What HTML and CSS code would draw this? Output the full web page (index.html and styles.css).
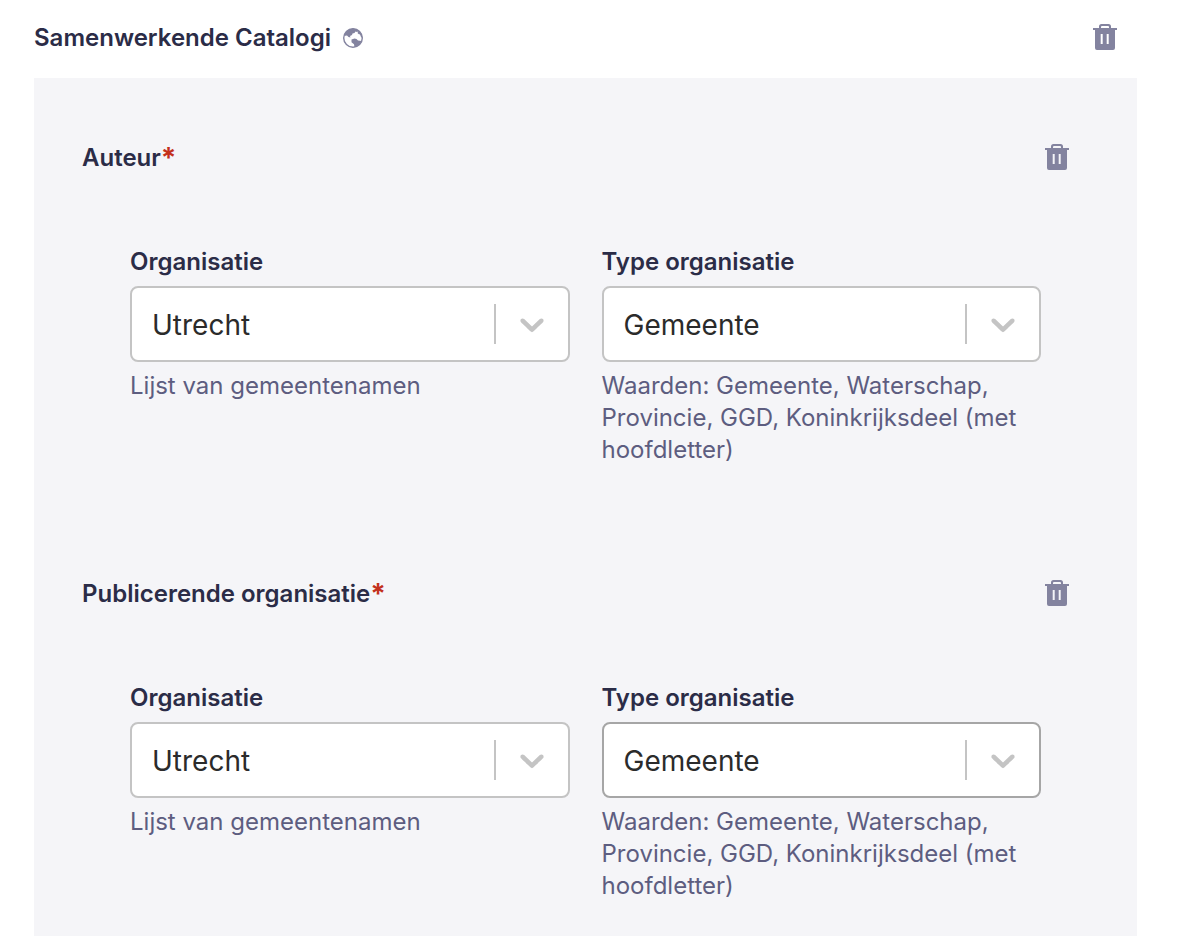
FILE: index.html
```html
<!DOCTYPE html>
<html lang="nl">
<head>
<meta charset="utf-8">
<meta name="viewport" content="width=device-width, initial-scale=1">
<title>Samenwerkende Catalogi</title>
<link rel="stylesheet" href="styles.css">
</head>
<body>
<svg class="sprite" aria-hidden="true">
  <symbol id="trash" viewBox="0 0 24 28">
    <path d="M6 5V3.500Q6 1 8.500 1h7Q18 1 18 3.500V5h6v2h-2v18q0 2-2 2H4q-2 0-2-2V7H0V5zm2 0h8V4q0-1-1-1H9Q8 3 8 4zM7.700 11v10h2V11zm6 0v10h2V11z" fill="currentColor" fill-rule="evenodd"/>
  </symbol>
  <symbol id="chevron" viewBox="0 0 20 20">
    <path d="M4.516 7.548c.436-.446 1.043-.481 1.576 0L10 11.295l3.908-3.747c.533-.481 1.141-.446 1.574 0 .436.445.408 1.197 0 1.615-.406.418-4.695 4.502-4.695 4.502a1.095 1.095 0 0 1-1.576 0S4.924 9.581 4.516 9.163s-.436-1.170 0-1.615z" fill="currentColor"/>
  </symbol>
</svg>
<main class="component">
  <header class="bar">
    <h1 class="title">Samenwerkende Catalogi
      <svg class="globe" viewBox="0 0 20 20" aria-hidden="true">
        <circle cx="10" cy="10" r="9.300" fill="none" stroke="currentColor" stroke-width="1.400"/>
        <path d="M1 8Q3 1 10 .500q4 0 6 2.500l-2 1-1.500-.500-1 1.500-2 .500-.500 1.500-2 1 .500 1.500-2-.500L4 7.500zM15.500 3Q19 5 19.500 10l-1.500-1-1-2.500-1.500-.500-1-1zM8.500 11.500l3-1 2 .500 1.500 1.500 3.500.500Q16.500 18 11.500 19.300l-.5-3-2.500-2z" fill="currentColor"/>
      </svg>
    </h1>
    <button class="delete" type="button" aria-label="Verwijder Samenwerkende Catalogi"><svg class="trash"><use href="#trash"/></svg></button>
  </header>
  <div class="panel">
    <section class="group">
      <header class="bar">
        <h2 class="title">Auteur<span class="required">*</span></h2>
        <button class="delete" type="button" aria-label="Verwijder Auteur"><svg class="trash"><use href="#trash"/></svg></button>
      </header>
      <div class="fields">
        <div class="field">
          <label class="label" for="org-1">Organisatie</label>
          <div class="control">
            <select class="select" id="org-1" aria-describedby="org-1-hint"><option>Utrecht</option></select>
            <span class="indicator"><svg class="chevron"><use href="#chevron"/></svg></span>
          </div>
          <p class="hint" id="org-1-hint">Lijst van gemeentenamen</p>
        </div>
        <div class="field">
          <label class="label" for="type-1">Type organisatie</label>
          <div class="control">
            <select class="select" id="type-1" aria-describedby="type-1-hint"><option>Gemeente</option></select>
            <span class="indicator"><svg class="chevron"><use href="#chevron"/></svg></span>
          </div>
          <p class="hint" id="type-1-hint">Waarden: Gemeente, Waterschap, Provincie, GGD, Koninkrijksdeel (met hoofdletter)</p>
        </div>
      </div>
    </section>
    <section class="group">
      <header class="bar">
        <h2 class="title">Publicerende organisatie<span class="required">*</span></h2>
        <button class="delete" type="button" aria-label="Verwijder Publicerende organisatie"><svg class="trash"><use href="#trash"/></svg></button>
      </header>
      <div class="fields">
        <div class="field">
          <label class="label" for="org-2">Organisatie</label>
          <div class="control">
            <select class="select" id="org-2" aria-describedby="org-2-hint"><option>Utrecht</option></select>
            <span class="indicator"><svg class="chevron"><use href="#chevron"/></svg></span>
          </div>
          <p class="hint" id="org-2-hint">Lijst van gemeentenamen</p>
        </div>
        <div class="field">
          <label class="label" for="type-2">Type organisatie</label>
          <div class="control">
            <select class="select select-active" id="type-2" aria-describedby="type-2-hint"><option>Gemeente</option></select>
            <span class="indicator"><svg class="chevron"><use href="#chevron"/></svg></span>
          </div>
          <p class="hint" id="type-2-hint">Waarden: Gemeente, Waterschap, Provincie, GGD, Koninkrijksdeel (met hoofdletter)</p>
        </div>
      </div>
    </section>
  </div>
</main>
</body>
</html>
```
FILE: styles.css
```css
* { box-sizing: border-box; }

body {
  margin: 0;
  background: #fff;
  color: #2b2c47;
  font-family: Inter, "Liberation Sans", sans-serif;
  font-size: 24px;
  line-height: 32px;
}

.sprite { position: absolute; width: 0; height: 0; }

.component {
  display: flex;
  flex-direction: column;
  min-height: 100vh;
  padding: 6px 41px 0 34px;
}

.bar {
  display: flex;
  align-items: center;
  justify-content: space-between;
  min-height: 64px;
}

.component > .bar { margin-bottom: 8px; }

.title {
  display: flex;
  align-items: center;
  margin: 0;
  font-size: 24px;
  font-weight: 600;
}

.globe { width: 20px; height: 20px; margin-left: 12px; color: #83839f; }

.required { color: #c3301c; font-size: 28px; font-weight: 700; }

.delete {
  display: flex;
  padding: 16px 20px 18px;
  border: 0;
  background: none;
  color: #83839f;
  cursor: pointer;
}

.trash { width: 24px; height: 28px; }

.panel {
  display: flex;
  flex: 1;
  flex-direction: column;
  gap: 96px;
  padding: 48px 48px 0;
  background: #f5f5f8;
}

.fields {
  display: grid;
  grid-template-columns: 1fr 1fr;
  gap: 32px;
  padding: 56px 48px 0;
}

.field {
  display: flex;
  flex-direction: column;
  gap: 8px;
  min-width: 0;
}

.label { font-weight: 600; }

.control { position: relative; }

.select {
  display: block;
  width: 100%;
  height: 76px;
  padding: 2px 80px 0 20px;
  border: 2px solid #c4c4c4;
  border-radius: 8px;
  appearance: none;
  background: #fff;
  color: #2b2b2b;
  font-family: inherit;
  font-size: 28px;
}

.select-active { border-color: #a6a6a6; }

.indicator {
  position: absolute;
  top: 18px;
  right: 18px;
  display: flex;
  align-items: center;
  height: 40px;
  padding-left: 16px;
  border-left: 2px solid #c4c4c4;
  color: #c4c4c4;
  pointer-events: none;
}

.chevron { width: 40px; height: 40px; }

.hint { margin: 0; color: #5d5d80; }
```
